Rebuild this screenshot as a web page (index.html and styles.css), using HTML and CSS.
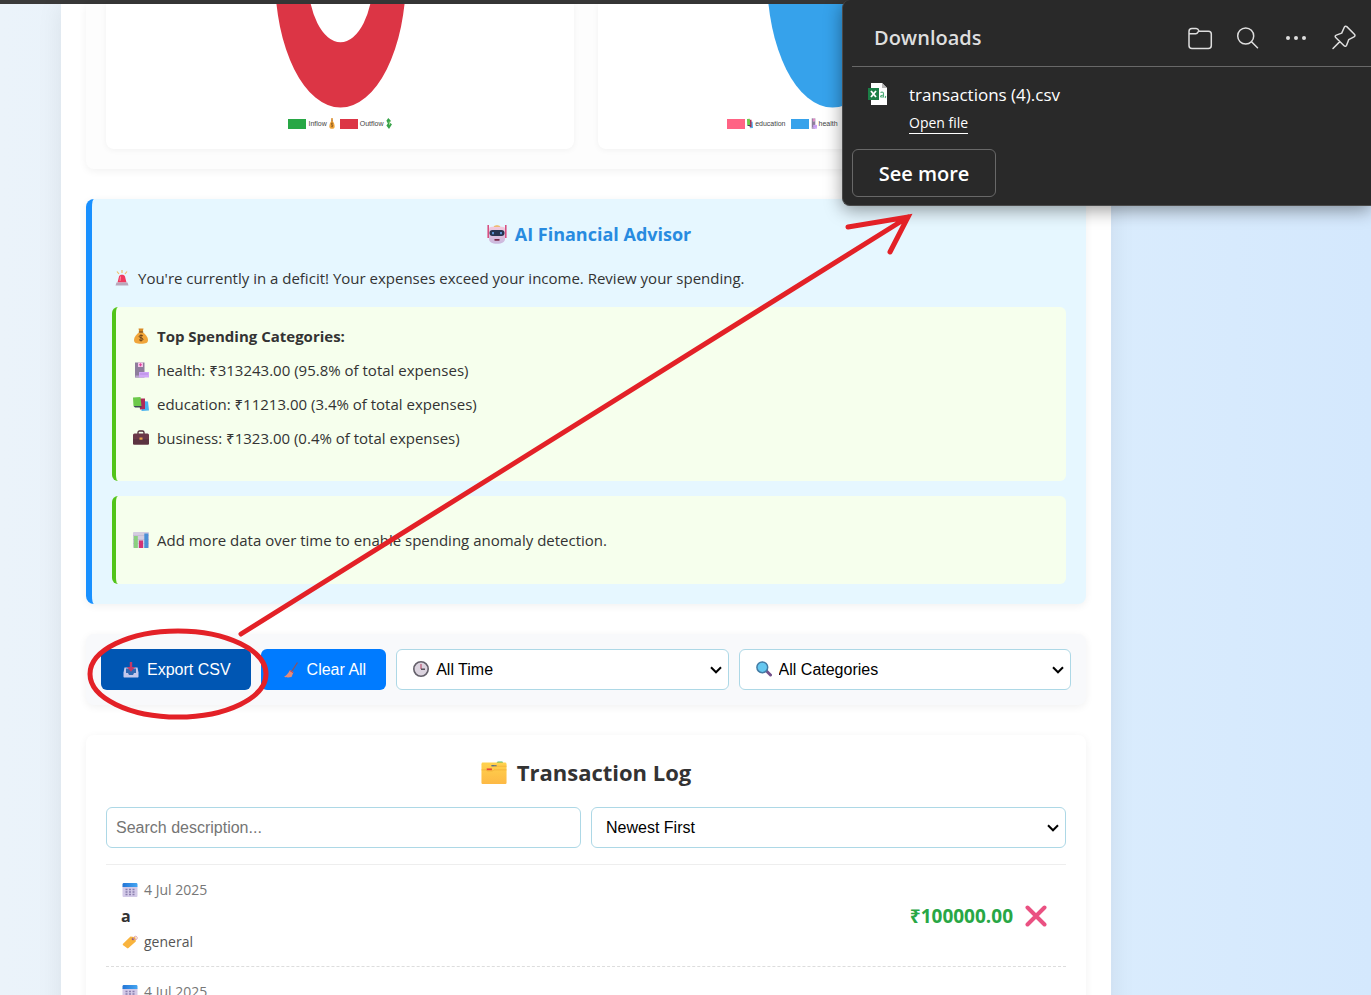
FILE: index.html
```html
<!DOCTYPE html>
<html lang="en">
<head>
<meta charset="utf-8">
<title>Finance Tracker</title>
<link rel="stylesheet" href="styles.css">
</head>
<body>
<svg class="defs" aria-hidden="true">
  <defs>
    <linearGradient id="gp" x1="0" y1="0" x2="0" y2="1"><stop offset="0" stop-color="#f3c9dc"/><stop offset="1" stop-color="#c9b8de"/></linearGradient>
    <linearGradient id="gf" x1="0" y1="0" x2="0" y2="1"><stop offset="0" stop-color="#ffd24d"/><stop offset="1" stop-color="#fdb945"/></linearGradient>
    <linearGradient id="gc" x1="0" y1="0" x2="1" y2="0"><stop offset="0" stop-color="#2375d6"/><stop offset="1" stop-color="#45a6f2"/></linearGradient>
    <symbol id="bag" viewBox="0 0 16 16"><path d="M5.500 .5h5L9.700 4H6.300z" fill="#d98a24"/><path d="M6.500 4h3c3 2 5.500 5 5.500 8s-2 3.700-7 3.700S1 15 1 12s2.500-6 5.500-8z" fill="#f0a53a"/><path d="M5.800 4h4.400" stroke="#7a4a1c" stroke-width="1.200"/><path d="M10 8c-.6-.9-3.800-1.100-3.800.5 0 1.700 3.800 1 3.800 2.700 0 1.700-3.200 1.500-4 .4M8 6.500v7" fill="none" stroke="#6b4119" stroke-width="1"/></symbol>
    <symbol id="hosp" viewBox="0 0 16 16"><path d="M2 .5h9.500V15.500H2z" fill="#8d7d9c"/><path d="M5 .5h5v4.500H5z" fill="#f5c3e8"/><path d="M7.500 1.300v3M6 2.800h3" stroke="#e0409a"/><path d="M6 10h10v5.500H6z" fill="#d0a6f7"/><path d="M7 12h8" stroke="#b58be0"/><path d="M2.500 13.500H6v2H2.500z" fill="#b9a5cc"/></symbol>
    <symbol id="books" viewBox="0 0 16 16"><path d="M9 5l6 .5 1 9-7.500.5z" fill="#49b3ef"/><path d="M6 2.500h6v10.500l-5 .5z" fill="#ad2b58"/><path d="M0 1.500L7.500 1l1 9H.5z" fill="#6cc94b"/><path d="M.5 10h8v1.500H2z" fill="#3f4759"/></symbol>
    <symbol id="case" viewBox="0 0 16 16"><path d="M5 4V2.500C5 1.500 5.500 1 6.500 1h3c1 0 1.500.500 1.500 1.500V4" fill="none" stroke="#4c2a36" stroke-width="1.300"/><rect y="3.500" width="16" height="11" rx="1.500" fill="#6a3848"/><path d="M0 9h16v4.500c0 .6-.4 1-1 1H1c-.6 0-1-.4-1-1z" fill="#5b3341"/><rect x="6.500" y="7.500" width="3" height="2.200" fill="#e8a44b"/></symbol>
    <symbol id="siren" viewBox="0 0 16 16"><path d="M8 0v3M3 1.500l2 2.500M13 1.500L11 4" stroke="#efc06a" stroke-width="1.200"/><path d="M3.500 12.500L5 6.500C5.500 4 10.500 4 11 6.500L12.500 12.500z" fill="#f03a5f"/><path d="M6.500 6.500L6 11" stroke="#ff91a4"/><path d="M2.500 12.500h11l1 3h-13z" fill="#b9a7bb"/></symbol>
    <symbol id="chart" viewBox="0 0 16 16"><rect width="16" height="16" rx="1" fill="#d4cde0"/><path d="M0 3.500h16M0 7.500h16M0 11.500h16" stroke="#bdb3cf" stroke-width=".6"/><path d="M.8 4h4v12h-4z" fill="#8bd07f"/><path d="M6 8.500h4V16H6z" fill="#d33374"/><path d="M11.300 1.500h4V16h-4z" fill="#4b90d6"/></symbol>
    <symbol id="robot" viewBox="0 0 20 20"><path d="M1.200 1v13M18.800 1v13" stroke="#d8487c" stroke-width="1.500"/><path d="M6.500 3.500c0-3 7-3 7 0z" fill="#eeb553"/><path d="M2 5c0-1.500 1-2.300 3-2.300h10c2 0 3 .8 3 2.300v10c0 3-3 4.800-8 4.800S2 18 2 15z" fill="url(#gp)"/><rect x="2.500" y="6" width="15" height="6" rx="3" fill="#26344f"/><path d="M6 8v2.200M14 8v2.200" stroke="#5d91d0" stroke-width="2"/><rect x="7.300" y="15" width="5.400" height="1.800" rx=".8" fill="#7a2948"/></symbol>
    <symbol id="inbox" viewBox="0 0 16 16"><path d="M1.500 5.500h13l1 5V14.500c0 .6-.4 1-1 1h-13c-.6 0-1-.4-1-1v-4z" fill="#c3c8ec"/><path d="M3 6.500h10v4.500h-2l-1 2H6l-1-2H3z" fill="#2f68b3"/><path d="M6.800 0h2.400v5H12L8 9.800 4 5h2.800z" fill="#c23a68"/></symbol>
    <symbol id="broom" viewBox="0 0 16 16"><path d="M14.500.5L9 9" stroke="#8c5260" stroke-width="1.300"/><path d="M7 8l3.500 2.300-2 4.700C5 15.800 2 15.300 1 14.500c2.500-.7 4-3 6-6.500z" fill="#e48b78"/><path d="M6.700 8.500l3.600 2.300" stroke="#bb3e53" stroke-width="1"/></symbol>
    <symbol id="clock" viewBox="0 0 16 16"><circle cx="8" cy="8" r="7.200" fill="#dcd4df" stroke="#64606a" stroke-width="1.600"/><path d="M8 3v5" stroke="#b84968" stroke-width="1.100"/><path d="M8 8.200h4" stroke="#423e49" stroke-width="1.300"/></symbol>
    <symbol id="lens" viewBox="0 0 16 16"><path d="M10.500 10l4 4" stroke="#74518a" stroke-width="3" stroke-linecap="round"/><circle cx="6.300" cy="6.300" r="5.400" fill="#66c8f0" stroke="#427ba4" stroke-width="1.500"/></symbol>
    <symbol id="folders" viewBox="0 0 24 22"><path d="M14 2.500L15.500.5h4.500l1 2z" fill="#54b96a"/><path d="M0 3c0-1 .5-1.500 1.500-1.500H22c1.500 0 2 .5 2 1.500v17.500c0 1-.5 1.500-1.500 1.500h-21C.5 22 0 21.500 0 20.500z" fill="url(#gf)"/><path d="M9.500 4.500h5" stroke="#58718b" stroke-width="1.400"/><path d="M5 8h5" stroke="#e64436" stroke-width="1.800"/><path d="M0 8.500h4.500l1 1h5.500l1-1h12M12 5h12" fill="none" stroke="#f0ad37" stroke-width=".7"/></symbol>
    <symbol id="cal" viewBox="0 0 16 15"><path d="M.5 4h15v9c0 1-.5 1.500-1.500 1.500H2C1 14.500.5 14 .5 13z" fill="#d3cae8"/><path d="M.5 4.500V2C.5 1 1 .5 2 .5h12c1 0 1.500.5 1.500 1.500v2.500z" fill="url(#gc)"/><path d="M3.500 7h2M7 7h2M10.500 7h2M3.500 9.500h2M7 9.500h2M10.500 9.500h2M3.500 12h2M7 12h2M10.500 12h2" stroke="#8b7fae" stroke-width="1.300"/></symbol>
    <symbol id="tag" viewBox="0 0 16 14"><path d="M.8 9L8.500 1.500l5 .8.300 4.200L6.500 13c-.6.500-1 .500-1.500 0L.8 10z" fill="#f9b43e"/><circle cx="11" cy="4" r="1.300" fill="#8f6077"/><path d="M11 4C11.500.5 15.500.5 15.200 3.200 15 5 13 5 11.500 4.200" fill="none" stroke="#d99aa5" stroke-width=".9"/></symbol>
    <symbol id="chev" viewBox="0 0 12 8"><path d="M1 1.300l5 5 5-5" fill="none" stroke="#000" stroke-width="2"/></symbol>
  </defs>
</svg>
<div class="browser-edge"></div>
<main class="container">
  <section class="card charts">
    <div class="chart">
      <svg class="plot" width="131" height="104" viewBox="0 4 131 104"><path fill-rule="evenodd" fill="#dc3545" d="M0-23.500a65.500 131 0 0 0 131 0zM32.700-23.500a32.700 65.500 0 0 0 65.600 0z"/></svg>
      <ul class="legend">
        <li><i class="swatch green"></i>Inflow <svg class="mini" preserveAspectRatio="none" viewBox="0 0 16 16"><use href="#bag" width="16" height="16"/></svg></li>
        <li><i class="swatch red"></i>Outflow <svg class="mini" preserveAspectRatio="none" viewBox="0 0 16 16"><path d="M6 0l7 4-3 3 6 2-8 7-7-5 4-3-4-4z" fill="#38a34a"/><path d="M8 5l2 5" stroke="#bce59b" stroke-width="2"/></svg></li>
      </ul>
    </div>
    <div class="chart">
      <svg class="plot" width="131" height="104" viewBox="0 4 131 104"><ellipse cx="65.500" cy="-23.500" rx="65.500" ry="131" fill="#36a2eb"/></svg>
      <ul class="legend">
        <li><i class="swatch pink"></i><svg class="mini" preserveAspectRatio="none" viewBox="0 0 16 16"><use href="#books" width="16" height="16"/></svg>education</li>
        <li><i class="swatch blue"></i><svg class="mini" preserveAspectRatio="none" viewBox="0 0 16 16"><use href="#hosp" width="16" height="16"/></svg>health</li>
        <li><i class="swatch yellow"></i><svg class="mini" preserveAspectRatio="none" viewBox="0 0 16 16"><use href="#case" width="16" height="16"/></svg>business</li>
        <li><i class="swatch teal"></i>food</li>
      </ul>
    </div>
  </section>

  <section class="card advisor">
    <h3 class="advisor-title"><svg class="icon-md"><use href="#robot"/></svg>AI Financial Advisor</h3>
    <p class="line warning"><svg class="icon"><use href="#siren"/></svg>You're currently in a deficit! Your expenses exceed your income. Review your spending.</p>
    <div class="tip">
      <p class="line"><svg class="icon"><use href="#bag"/></svg><strong>Top Spending Categories:</strong></p>
      <p class="line"><svg class="icon"><use href="#hosp"/></svg>health: ₹313243.00 (95.8% of total expenses)</p>
      <p class="line"><svg class="icon"><use href="#books"/></svg>education: ₹11213.00 (3.4% of total expenses)</p>
      <p class="line"><svg class="icon"><use href="#case"/></svg>business: ₹1323.00 (0.4% of total expenses)</p>
    </div>
    <div class="tip note">
      <p class="line"><svg class="icon"><use href="#chart"/></svg>Add more data over time to enable spending anomaly detection.</p>
    </div>
  </section>

  <section class="card filters">
    <button class="btn active" type="button"><svg class="icon"><use href="#inbox"/></svg>Export CSV</button>
    <button class="btn" type="button"><svg class="icon"><use href="#broom"/></svg>Clear All</button>
    <div class="select with-icon"><svg class="icon lead"><use href="#clock"/></svg><select aria-label="Time range"><option>All Time</option></select><svg class="chev"><use href="#chev"/></svg></div>
    <div class="select with-icon"><svg class="icon lead"><use href="#lens"/></svg><select aria-label="Category"><option>All Categories</option></select><svg class="chev"><use href="#chev"/></svg></div>
  </section>

  <section class="card log">
    <h2 class="log-title"><svg class="icon-lg"><use href="#folders"/></svg>Transaction Log</h2>
    <div class="log-tools">
      <input class="search" type="text" placeholder="Search description..." aria-label="Search description">
      <div class="select"><select aria-label="Sort order"><option>Newest First</option></select><svg class="chev"><use href="#chev"/></svg></div>
    </div>
    <ul class="items">
      <li class="item">
        <div class="details">
          <span class="meta date"><svg class="icon"><use href="#cal"/></svg>4 Jul 2025</span>
          <strong class="name">a</strong>
          <span class="meta"><svg class="icon"><use href="#tag"/></svg>general</span>
        </div>
        <span class="amount">₹100000.00</span>
        <button class="delete" type="button" aria-label="Delete"><svg width="22" height="22" viewBox="0 0 22 22"><path d="M2.500 2.500l17 17M19.500 2.500l-17 17" stroke="#ea5182" stroke-width="4" stroke-linecap="round"/></svg></button>
      </li>
      <li class="item">
        <div class="details">
          <span class="meta date"><svg class="icon"><use href="#cal"/></svg>4 Jul 2025</span>
        </div>
      </li>
    </ul>
  </section>
</main>

<aside class="downloads">
  <header class="dl-head">
    <h2 class="dl-title">Downloads</h2>
    <button class="tool" type="button" aria-label="Open downloads folder"><svg width="26" height="26" viewBox="0 0 26 26"><path d="M2 6.500c0-2 1-3 3-3h4.200c1.500 0 2 .6 3 2.700H21.500c2 0 2.800 1 2.800 2.800v11.500c0 2-1 3-3 3H5c-2 0-3-1-3-3zM2 8.800h6.800c1.300 0 1.800-.7 2.900-2.600"/></svg></button>
    <button class="tool" type="button" aria-label="Search downloads"><svg width="26" height="26" viewBox="0 0 26 26"><circle cx="10.700" cy="11" r="8"/><path d="M16.500 16.800l6 6"/></svg></button>
    <button class="tool" type="button" aria-label="More options"><svg width="26" height="26" viewBox="0 0 26 26"><g fill="#dedede" stroke="none"><circle cx="5" cy="13" r="2"/><circle cx="13" cy="13" r="2"/><circle cx="21" cy="13" r="2"/></g></svg></button>
    <button class="tool" type="button" aria-label="Pin downloads"><svg width="26" height="26" viewBox="0 0 26 26"><path d="M15.800 1.600l7.600 7.700c.9 1 .7 2-.4 2.600l-5.300 2.800-2.100 5.500c-.5 1.200-1.600 1.500-2.500.6L4.700 12.500c-.9-.9-.6-2 .6-2.400l5.400-2L13.300 2.200c.5-1.100 1.600-1.400 2.500-.6zM8.800 16.600L2 23.500"/></svg></button>
  </header>
  <div class="dl-file">
    <svg class="file-icon" width="20" height="22" viewBox="0 0 20 22"><path d="M3 0h11l5 5v17H3z" fill="#fff"/><path d="M14 0v5h5z" fill="#b9b9b9"/><path d="M0 5h11v12H0z" fill="#1b7e46"/><path d="M3 8l5 6M8 8l-5 6" stroke="#fff" stroke-width="1.800"/><path d="M12.500 9.500c2-.8 3 0 3 1.200V14h-2c-1.800 0-1-2.200 2-1.700M17.700 13l-.5 2" fill="none" stroke="#4fae79" stroke-width="1.100"/></svg>
    <div class="dl-info">
      <span class="dl-name">transactions (4).csv</span>
      <a class="dl-open" href="#open">Open file</a>
    </div>
  </div>
  <button class="more" type="button">See more</button>
</aside>

<svg class="annotation" aria-hidden="true">
  <ellipse cx="178" cy="674" rx="88" ry="43"/>
  <path d="M241 634L908 217M848 227L908 217L890 252"/>
</svg>
</body>
</html>
```
FILE: styles.css
```css
* { box-sizing: border-box; }

body {
  margin: 0;
  height: 100vh;
  overflow: hidden;
  position: relative;
  color: #333;
  font-family: "Open Sans", "Noto Sans", sans-serif;
  font-size: 15px;
  line-height: 24px;
  background: linear-gradient(to right, #ebf3fa, #daecfd 80%, #d4e8fd);
}

h2, h3, p, ul { margin: 0; padding: 0; }
ul { list-style: none; }
svg { display: block; flex: none; }

.defs { position: absolute; width: 0; height: 0; }

.browser-edge { height: 4px; background: #3a3a3a; }

.container {
  max-width: 1050px;
  min-height: 100vh;
  margin-left: 61px;
  padding: 0 25px;
  background: #fff;
  box-shadow: 0 0 24px rgba(0, 0, 0, 0.08);
}

.card {
  border-radius: 8px;
  margin-bottom: 30px;
  box-shadow: 0 2px 8px rgba(0, 0, 0, 0.06);
}

/* Charts */
.charts {
  display: grid;
  grid-template-columns: 1fr 1fr;
  gap: 24px;
  padding: 0 20px 20px;
  background: #fdfdfd;
  border-radius: 0 0 8px 8px;
}
.chart {
  display: flex;
  flex-direction: column;
  align-items: center;
  padding-bottom: 18px;
  background: #fff;
  border-radius: 0 0 8px 8px;
  box-shadow: 0 1px 6px rgba(0, 0, 0, 0.05);
}
.legend {
  display: flex;
  gap: 5px;
  margin-top: 8px;
  font-family: "Liberation Sans Narrow", "Liberation Sans", sans-serif;
  font-size: 7px;
  line-height: 15px;
  color: #444;
}
.legend li { display: flex; align-items: center; gap: 2px; }
.mini { width: 6px; height: 11px; }
.swatch { width: 18px; height: 10px; }
.green { background: #28a745; }
.red { background: #dc3545; }
.pink { background: #ff6384; }
.blue { background: #36a2eb; }
.yellow { background: #ffce56; }
.teal { background: #4bc0c0; }

/* Advisor */
.advisor {
  padding: 20px;
  background: #e6f7ff;
  border-left: 6px solid #1890ff;
}
.advisor-title {
  display: flex;
  justify-content: center;
  align-items: center;
  gap: 8px;
  margin-bottom: 17px;
  font-size: 18px;
  line-height: 30px;
  color: #288be0;
}
.icon { width: 16px; height: 16px; }
.icon-md { width: 20px; height: 20px; }
.icon-lg { width: 26px; height: 23px; }
.line { display: flex; align-items: center; gap: 8px; }
.line + .line { margin-top: 10px; }
.warning { margin-bottom: 17px; padding-left: 2px; }
.tip {
  padding: 17px 17px 31px;
  background: #f6ffed;
  border-left: 4px solid #52c41a;
  border-radius: 6px;
}
.tip + .tip { margin-top: 15px; }
.note { padding: 32px 17px; }

/* Filters */
.filters {
  display: flex;
  gap: 10px;
  padding: 15px;
  background: #f8f9fb;
}
.btn, select, .search {
  height: 41px;
  font-family: "Liberation Sans", Arial, sans-serif;
  font-size: 16px;
}
.btn {
  display: flex;
  align-items: center;
  gap: 8px;
  padding: 0 20px 0 22px;
  color: #fff;
  background: #007bff;
  border: 0;
  border-radius: 6px;
}
.btn.active { background: #0056b3; }
.select { position: relative; flex: 1; }
select {
  appearance: none;
  display: block;
  width: 100%;
  padding: 0 30px 0 14px;
  color: #000;
  background: #fff;
  border: 1px solid #add8e6;
  border-radius: 6px;
}
.with-icon select { padding-left: 39px; }
.lead { position: absolute; left: 17px; top: 12px; }
.chev { position: absolute; right: 7px; top: 17px; width: 12px; height: 8px; }

/* Transaction log */
.log { margin-bottom: 0; padding: 20px; }
.log-title {
  display: flex;
  justify-content: center;
  align-items: center;
  gap: 10px;
  margin-bottom: 17px;
  font-size: 22px;
  line-height: 35px;
}
.log-tools { display: grid; grid-template-columns: 1fr 1fr; gap: 10px; }
.search {
  min-width: 0;
  padding: 0 9px;
  background: #fff;
  border: 1px solid #add8e6;
  border-radius: 6px;
}
.search::placeholder { color: #757575; }
.items { margin-top: 16px; border-top: 1px solid #eee; }
.item {
  display: flex;
  align-items: center;
  padding: 12px 19px 11px 15px;
  line-height: 26px;
  border-bottom: 1px dashed #ddd;
}
.details { flex: 1; }
.meta { display: flex; align-items: center; gap: 6px; padding-left: 1px; font-size: 14px; color: #555; }
.date { color: #777; }
.name { display: block; font-size: 16px; }
.amount { font-size: 19px; font-weight: 700; color: #28a745; }
.delete { margin-left: 12px; padding: 0; background: none; border: 0; }

/* Downloads flyout */
.downloads {
  position: absolute;
  top: 0;
  right: 0;
  width: 529px;
  padding: 0 0 8px 9px;
  color: #fff;
  background: #292929;
  border: 1px solid #4a4a4a;
  border-width: 0 0 1px 1px;
  border-radius: 8px 0 0 8px;
  box-shadow: 0 4px 18px rgba(0, 0, 0, 0.4);
}
.dl-head {
  display: flex;
  align-items: center;
  gap: 22px;
  height: 67px;
  padding: 9px 14px 0 22px;
  border-bottom: 1px solid #686868;
}
.dl-title { flex: 1; font-size: 20px; font-weight: 600; color: #dedede; }
.tool { height: 26px; padding: 0; background: none; border: 0; }
.tool svg { fill: none; stroke: #dedede; stroke-width: 1.5; stroke-linecap: round; stroke-linejoin: round; }
.dl-file { display: flex; gap: 21px; padding: 16px 16px 15px; }
.dl-info { display: flex; flex-direction: column; align-items: flex-start; gap: 6px; }
.dl-name { font-size: 17px; }
.dl-open { font-size: 14px; line-height: 20px; color: #fff; text-decoration: none; border-bottom: 1px solid #fff; }
.more {
  display: block;
  width: 144px;
  height: 48px;
  font: 600 20px "Open Sans", sans-serif;
  color: #fff;
  background: none;
  border: 1px solid #686868;
  border-radius: 6px;
}

/* Hand-drawn callout */
.annotation {
  position: absolute;
  inset: 0;
  width: 100%;
  height: 100%;
  pointer-events: none;
  fill: none;
  stroke: #e32127;
  stroke-width: 5;
  stroke-linecap: round;
}
```
